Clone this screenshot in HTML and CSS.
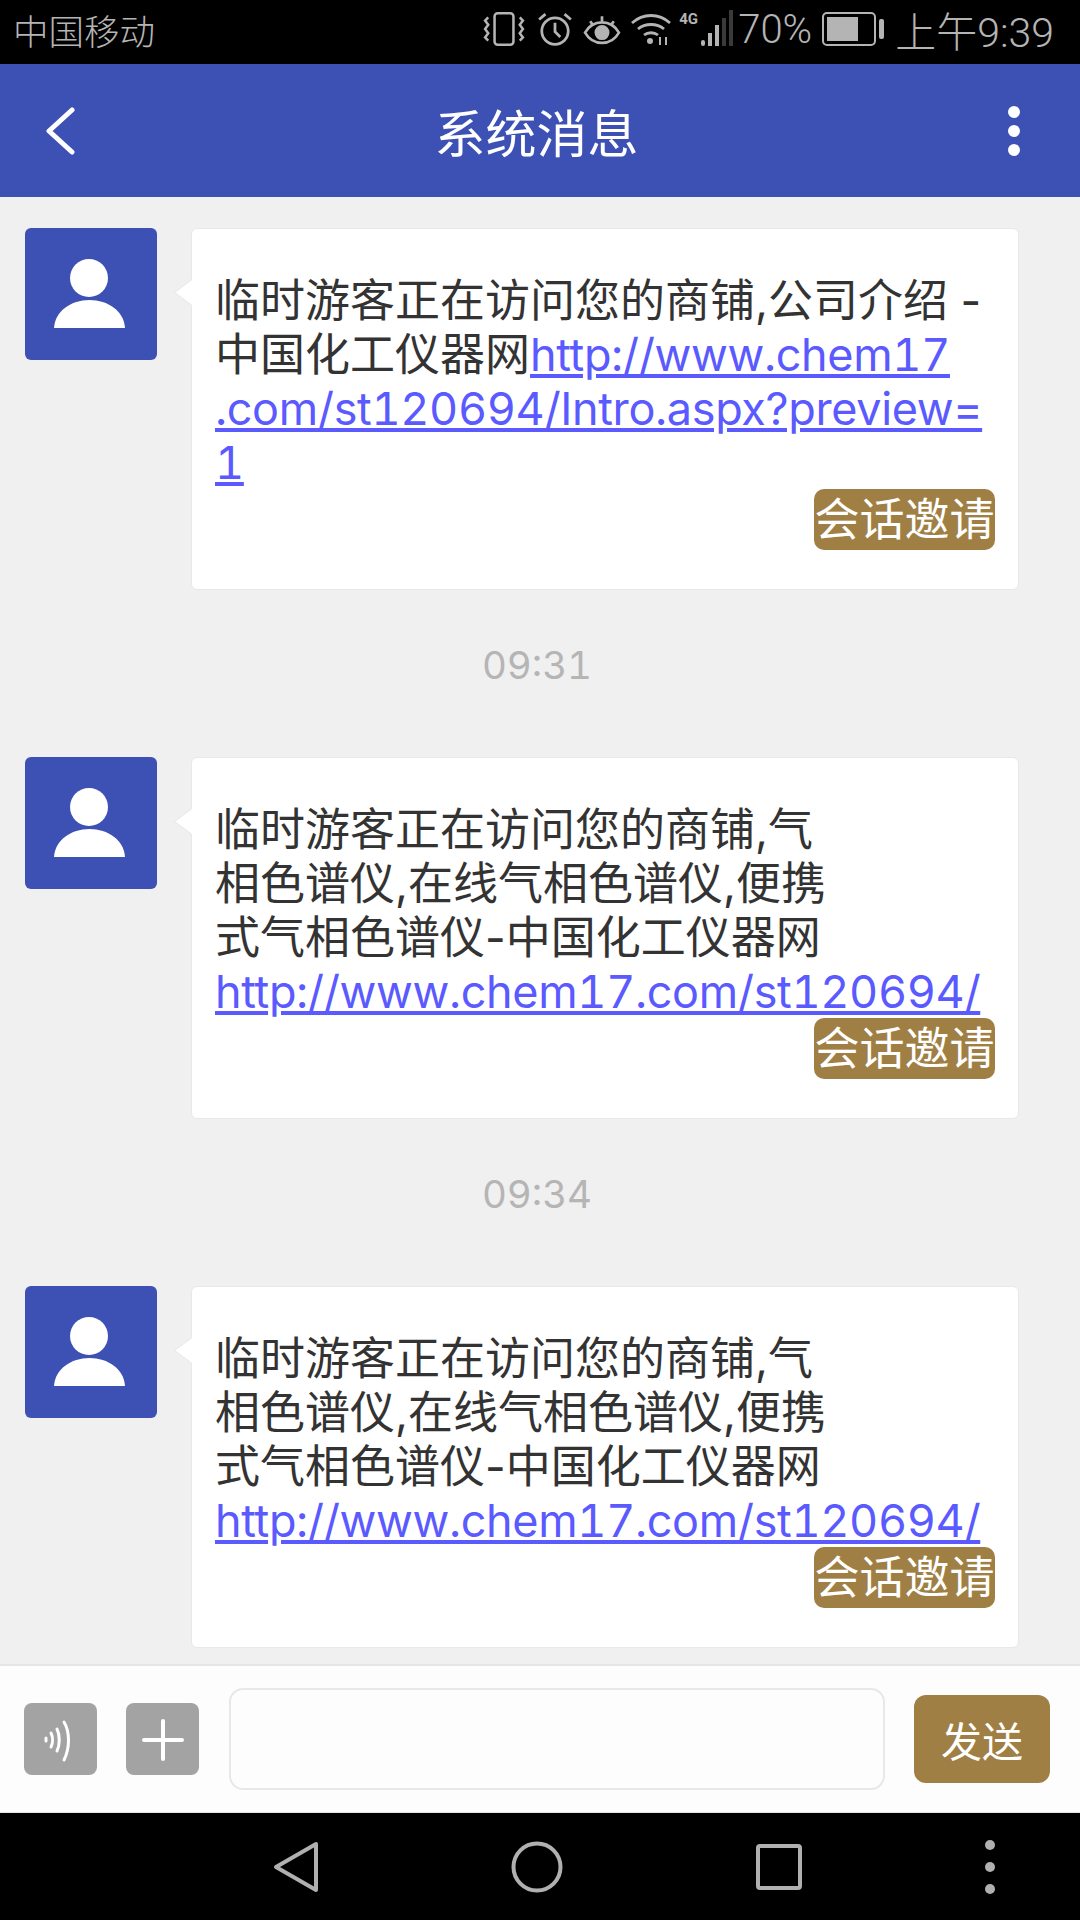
FILE: index.html
```html
<!DOCTYPE html>
<html lang="zh-CN">
<head>
    <meta charset="UTF-8">
    <meta name="viewport" content="width=device-width, initial-scale=1.0">
    <title>系统消息</title>
    <link rel="stylesheet" href="styles.css">
</head>
<body>
    <div class="statusbar">
        <span class="carrier">中国移动</span>
        <div class="status-right">
            <!-- vibrate -->
            <svg class="ic-vibrate" width="42" height="36" viewBox="0 0 40 34" fill="none" stroke="#b4b4b4" stroke-width="2.4">
                <rect x="11" y="2" width="18" height="30" rx="3"/>
                <path d="M5 6l-3 3 3 4-3 4 3 4-3 4 3 3M35 6l3 3-3 4 3 4-3 4 3 4-3 3"/>
            </svg>
            <!-- alarm -->
            <svg class="ic-alarm" width="36" height="36" viewBox="0 0 34 34" fill="none" stroke="#b4b4b4" stroke-width="2.6">
                <circle cx="17" cy="19" r="12.5"/>
                <path d="M17 11v8.5l5 5M2 8l6-5M32 8l-6-5"/>
            </svg>
            <!-- eye comfort -->
            <svg class="ic-eye" width="38" height="35" viewBox="0 0 37 34" fill="none" stroke="#b4b4b4" stroke-width="2.6">
                <path d="M2 20c4-7 9-10 16.500-10S31 13 35 20c-4 7-9 10-16.500 10S6 27 2 20z"/>
                <circle cx="18.500" cy="20" r="6" fill="#b4b4b4"/>
                <path d="M7 9l3 4M18.500 4v5M30 9l-3 4"/>
            </svg>
            <!-- wifi with arrows -->
            <svg class="ic-wifi" width="42" height="34" viewBox="0 0 42 34" fill="none" stroke="#b4b4b4" stroke-width="2.8">
                <path d="M2 11c11-10 27-10 38 0M8 17c7-6 19-6 26 0M14 23c4-3 10-3 14 0"/>
                <circle cx="20" cy="29" r="3" fill="#b4b4b4" stroke="none"/>
                <path d="M30 33v-8M36 25v8" stroke-width="2"/>
            </svg>
            <!-- signal -->
            <div class="signal">
                <span class="net">4G</span>
                <svg width="33" height="38" viewBox="0 0 33 38">
                    <rect x="0" y="30" width="4" height="6" rx="2" fill="#b4b4b4"/>
                    <rect x="7" y="23" width="4" height="13" fill="#b4b4b4"/>
                    <rect x="14" y="15" width="4" height="21" fill="#b4b4b4"/>
                    <rect x="21" y="8" width="4" height="28" fill="#3a3a3a"/>
                    <rect x="28" y="0" width="4" height="36" fill="#3a3a3a"/>
                </svg>
            </div>
            <span class="percent">70%</span>
            <!-- battery -->
            <div class="battery">
                <div class="battery-body"><div class="battery-fill"></div></div>
                <div class="battery-cap"></div>
            </div>
            <span class="clock">上午9:39</span>
        </div>
    </div>

    <div class="header">
        <svg class="back" width="30" height="48" viewBox="0 0 30 48" fill="none" stroke="#fff" stroke-width="5" stroke-linecap="round" stroke-linejoin="round">
            <path d="M27 3L4 24l23 21"/>
        </svg>
        <h1>系统消息</h1>
        <div class="more"><i></i><i></i><i></i></div>
    </div>

    <div class="chat">
        <div class="msg">
            <div class="avatar">
                <svg width="132" height="132" viewBox="0 0 132 132" fill="#fff">
                    <circle cx="64" cy="50" r="19"/>
                    <path d="M29 100c1-17 17-28 35.500-28S99 83 100 100z"/>
                </svg>
            </div>
            <div class="bubble">
                <p>临时游客正在访问您的商铺,公司介绍 -<br>中国化工仪器网<a href="#">http://www.chem17<br>.com/st120694/Intro.aspx?preview=<br>1</a></p>
                <div class="actions"><span class="invite">会话邀请</span></div>
            </div>
        </div>
        <div class="time">09:31</div>
        <div class="msg">
            <div class="avatar">
                <svg width="132" height="132" viewBox="0 0 132 132" fill="#fff">
                    <circle cx="64" cy="50" r="19"/>
                    <path d="M29 100c1-17 17-28 35.500-28S99 83 100 100z"/>
                </svg>
            </div>
            <div class="bubble">
                <p>临时游客正在访问您的商铺,气<br>相色谱仪,在线气相色谱仪,便携<br>式气相色谱仪-中国化工仪器网<br><a href="#">http://www.chem17.com/st120694/</a></p>
                <div class="actions"><span class="invite">会话邀请</span></div>
            </div>
        </div>
        <div class="time">09:34</div>
        <div class="msg">
            <div class="avatar">
                <svg width="132" height="132" viewBox="0 0 132 132" fill="#fff">
                    <circle cx="64" cy="50" r="19"/>
                    <path d="M29 100c1-17 17-28 35.500-28S99 83 100 100z"/>
                </svg>
            </div>
            <div class="bubble">
                <p>临时游客正在访问您的商铺,气<br>相色谱仪,在线气相色谱仪,便携<br>式气相色谱仪-中国化工仪器网<br><a href="#">http://www.chem17.com/st120694/</a></p>
                <div class="actions"><span class="invite">会话邀请</span></div>
            </div>
        </div>
    </div>

    <div class="inputbar">
        <button class="tool">
            <svg width="73" height="72" viewBox="0 0 73 72" fill="none" stroke="#fff" stroke-width="3" stroke-linecap="round">
                <path d="M22 35v3M27 30c2 4 2 10 0 14M33 26c3 6 3 16 0 22M40 19c6 10 6 26 0 38"/>
            </svg>
        </button>
        <button class="tool plus">
            <svg width="73" height="72" viewBox="0 0 73 72" fill="none" stroke="#fff" stroke-width="4" stroke-linecap="round">
                <path d="M37 18v38M18 37h38"/>
            </svg>
        </button>
        <div class="textbox"></div>
        <button class="send">发送</button>
    </div>

    <div class="navbar">
        <svg class="nav-back" width="46" height="52" viewBox="0 0 46 52" fill="none" stroke="#b0b0b0" stroke-width="4" stroke-linejoin="round">
            <path d="M43 3v46L3 26z"/>
        </svg>
        <svg class="nav-home" width="52" height="52" viewBox="0 0 52 52" fill="none" stroke="#b0b0b0" stroke-width="4">
            <circle cx="26" cy="26" r="23.500"/>
        </svg>
        <div class="nav-recent"></div>
        <div class="nav-more"><i></i><i></i><i></i></div>
    </div>
</body>
</html>
```

FILE: styles.css
```css
* {
    box-sizing: border-box;
}
body {
    margin: 0;
    width: 1080px;
    height: 1920px;
    overflow: hidden;
    display: flex;
    flex-direction: column;
    background-color: #f0f0f0;
    font-family: Inter, "Noto Sans CJK SC", sans-serif;
}

/* status bar */
.statusbar {
    height: 64px;
    background-color: #000;
    color: #b4b4b4;
    display: flex;
    align-items: center;
    justify-content: space-between;
    padding: 0 26px 6px 13px;
    font-family: Roboto, "Noto Sans CJK SC", sans-serif;
    font-weight: 300;
}
.carrier {
    font-size: 35.5px;
}
.status-right {
    display: flex;
    align-items: center;
}
.ic-vibrate {
    margin-right: 12px;
}
.ic-alarm {
    margin-right: 10px;
}
.ic-eye {
    margin-right: 9px;
}
.ic-wifi {
    margin-right: 7px;
}
.signal {
    position: relative;
    width: 55px;
    height: 38px;
    display: flex;
    justify-content: flex-end;
    margin-right: 4px;
}
.net {
    position: absolute;
    left: 0;
    top: 0;
    font-size: 15px;
    font-weight: 700;
}
.percent {
    font-size: 40px;
    margin-right: 10px;
}
.battery {
    display: flex;
    align-items: center;
    margin-right: 11px;
}
.battery-body {
    width: 54px;
    height: 34px;
    border: 2px solid #b4b4b4;
    border-radius: 5px;
    padding: 3px;
}
.battery-fill {
    width: 70%;
    height: 100%;
    background-color: #b4b4b4;
}
.battery-cap {
    width: 5px;
    height: 20px;
    margin-left: 3px;
    background-color: #b4b4b4;
    border-radius: 2px;
}
.clock {
    font-size: 41px;
}

/* title bar */
.header {
    height: 133px;
    background-color: #3d51b5;
    display: flex;
    align-items: center;
    justify-content: space-between;
    padding: 0 60px 0 45px;
    color: #fff;
}
.header h1 {
    margin: 0 10px 0 0;
    font-size: 51px;
    font-weight: 400;
}
.more {
    display: flex;
    flex-direction: column;
    gap: 7px;
}
.more i {
    display: block;
    width: 12px;
    height: 12px;
    border-radius: 50%;
    background-color: #fff;
}

/* messages */
.chat {
    flex: 1;
    overflow: hidden;
    padding: 31px 0 0 25px;
}
.msg {
    display: flex;
    align-items: flex-start;
}
.avatar {
    width: 132px;
    height: 132px;
    flex: none;
    background-color: #3d51b5;
    border-radius: 6px;
}
.avatar svg {
    display: block;
}
.bubble {
    position: relative;
    width: 828px;
    height: 362px;
    margin-left: 34px;
    padding: 45px 23px 0;
    background-color: #fff;
    border: 1px solid #e8e8e8;
    border-radius: 6px;
}
.bubble::before {
    content: "";
    position: absolute;
    left: -10px;
    top: 54px;
    width: 18px;
    height: 18px;
    background-color: #fff;
    border-left: 1px solid #e8e8e8;
    border-bottom: 1px solid #e8e8e8;
    transform: scaleX(1.35) rotate(45deg);
}
.bubble p {
    margin: 0;
    font-size: 45px;
    line-height: 54px;
    color: #333;
    white-space: nowrap;
}
.bubble a {
    color: #5a5aff;
    font-variant-numeric: tabular-nums;
    letter-spacing: -0.35px;
}
.actions {
    display: flex;
    justify-content: flex-end;
    margin-top: -1px;
}
.invite {
    width: 181px;
    height: 61px;
    background-color: #a07f45;
    border-radius: 10px;
    color: #fff;
    font-size: 45px;
    line-height: 61px;
    text-align: center;
    white-space: nowrap;
}
.time {
    height: 167px;
    padding-top: 52px;
    text-align: center;
    font-size: 38.5px;
    font-variant-numeric: tabular-nums;
    line-height: 46px;
    color: #b5b5b5;
    margin-left: -31px;
}

/* input bar */
.inputbar {
    height: 149px;
    background-color: #fdfdfd;
    border-top: 2px solid #e6e6e6;
    border-bottom: 1px solid #e6e6e6;
    display: flex;
    align-items: center;
    padding: 0 30px 0 24px;
}
button {
    border: none;
    padding: 0;
    font-family: inherit;
}
.tool {
    width: 73px;
    height: 72px;
    background-color: #a3a3a3;
    border-radius: 8px;
    margin-right: 29px;
}
.tool svg {
    display: block;
}
.plus {
    margin-right: 30px;
}
.textbox {
    flex: 1;
    height: 102px;
    background-color: #fdfdfd;
    border: 2px solid #e8e8e8;
    border-radius: 14px;
    margin-right: 29px;
}
.send {
    width: 136px;
    height: 88px;
    background-color: #a07f45;
    border-radius: 12px;
    color: #fff;
    font-size: 41px;
}

/* system nav */
.navbar {
    height: 107px;
    background-color: #000;
    display: flex;
    align-items: center;
    padding: 0 85px 0 273px;
}
.nav-home {
    margin-left: 192px;
}
.nav-recent {
    width: 46px;
    height: 46px;
    margin-left: 193px;
    border: 4px solid #b0b0b0;
    border-radius: 4px;
}
.nav-more {
    margin-left: auto;
    display: flex;
    flex-direction: column;
    gap: 12px;
}
.nav-more i {
    display: block;
    width: 10px;
    height: 10px;
    border-radius: 50%;
    background-color: #b0b0b0;
}
```
